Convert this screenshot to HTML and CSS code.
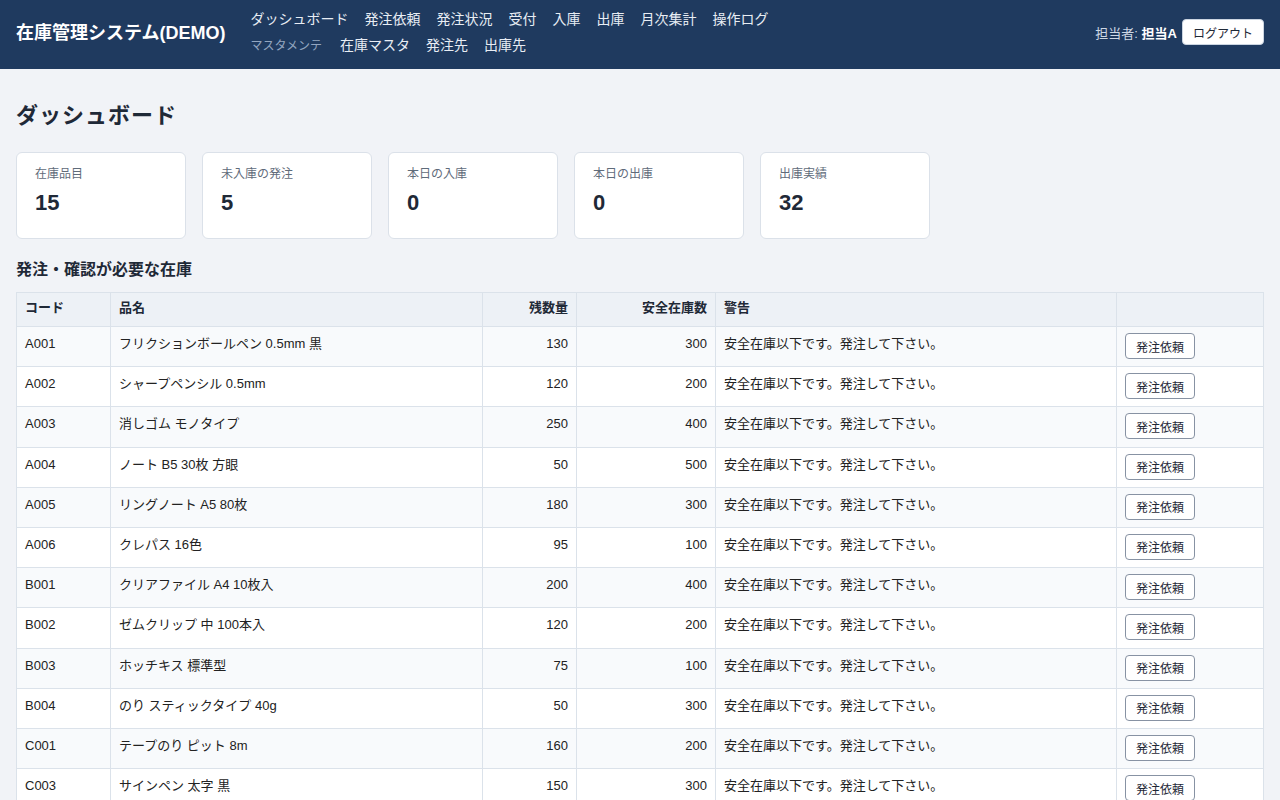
FILE: index.html
```html
<!DOCTYPE html>
<html lang="ja">
<head>
    <meta charset="utf-8">
    <title>ダッシュボード - 在庫管理システム</title>
    <link rel="stylesheet" href="styles.css">
</head>
<body>
    <header class="topbar">
        <div class="brand">在庫管理システム(DEMO)</div>
        <nav class="nav">
            <div class="nav-row">
                <a href="#">ダッシュボード</a>
                <a href="#">発注依頼</a>
                <a href="#">発注状況</a>
                <a href="#">受付</a>
                <a href="#">入庫</a>
                <a href="#">出庫</a>
                <a href="#">月次集計</a>
                <a href="#">操作ログ</a>
            </div>
            <div class="nav-row">
                <span class="nav-label">マスタメンテ</span>
                <a href="#">在庫マスタ</a>
                <a href="#">発注先</a>
                <a href="#">出庫先</a>
            </div>
        </nav>
        <div class="user">
            <span>担当者: <strong>担当A</strong></span>
            <button class="btn-logout">ログアウト</button>
        </div>
    </header>

    <main class="content">
        <h1>ダッシュボード</h1>

        <div class="stats">
            <div class="stat-card">
                <div class="stat-label">在庫品目</div>
                <div class="stat-value">15</div>
            </div>
            <div class="stat-card">
                <div class="stat-label">未入庫の発注</div>
                <div class="stat-value">5</div>
            </div>
            <div class="stat-card">
                <div class="stat-label">本日の入庫</div>
                <div class="stat-value">0</div>
            </div>
            <div class="stat-card">
                <div class="stat-label">本日の出庫</div>
                <div class="stat-value">0</div>
            </div>
            <div class="stat-card">
                <div class="stat-label">出庫実績</div>
                <div class="stat-value">32</div>
            </div>
        </div>

        <h2>発注・確認が必要な在庫</h2>

        <table class="stock-table">
            <colgroup>
                <col style="width: 94px">
                <col style="width: 372px">
                <col style="width: 94px">
                <col style="width: 139px">
                <col style="width: 401px">
                <col style="width: 147px">
            </colgroup>
            <thead>
                <tr>
                    <th>コード</th>
                    <th>品名</th>
                    <th class="num">残数量</th>
                    <th class="num">安全在庫数</th>
                    <th>警告</th>
                    <th></th>
                </tr>
            </thead>
            <tbody>
                <tr><td>A001</td><td>フリクションボールペン 0.5mm 黒</td><td class="num">130</td><td class="num">300</td><td>安全在庫以下です。発注して下さい。</td><td><button class="btn">発注依頼</button></td></tr>
                <tr><td>A002</td><td>シャープペンシル 0.5mm</td><td class="num">120</td><td class="num">200</td><td>安全在庫以下です。発注して下さい。</td><td><button class="btn">発注依頼</button></td></tr>
                <tr><td>A003</td><td>消しゴム モノタイプ</td><td class="num">250</td><td class="num">400</td><td>安全在庫以下です。発注して下さい。</td><td><button class="btn">発注依頼</button></td></tr>
                <tr><td>A004</td><td>ノート B5 30枚 方眼</td><td class="num">50</td><td class="num">500</td><td>安全在庫以下です。発注して下さい。</td><td><button class="btn">発注依頼</button></td></tr>
                <tr><td>A005</td><td>リングノート A5 80枚</td><td class="num">180</td><td class="num">300</td><td>安全在庫以下です。発注して下さい。</td><td><button class="btn">発注依頼</button></td></tr>
                <tr><td>A006</td><td>クレパス 16色</td><td class="num">95</td><td class="num">100</td><td>安全在庫以下です。発注して下さい。</td><td><button class="btn">発注依頼</button></td></tr>
                <tr><td>B001</td><td>クリアファイル A4 10枚入</td><td class="num">200</td><td class="num">400</td><td>安全在庫以下です。発注して下さい。</td><td><button class="btn">発注依頼</button></td></tr>
                <tr><td>B002</td><td>ゼムクリップ 中 100本入</td><td class="num">120</td><td class="num">200</td><td>安全在庫以下です。発注して下さい。</td><td><button class="btn">発注依頼</button></td></tr>
                <tr><td>B003</td><td>ホッチキス 標準型</td><td class="num">75</td><td class="num">100</td><td>安全在庫以下です。発注して下さい。</td><td><button class="btn">発注依頼</button></td></tr>
                <tr><td>B004</td><td>のり スティックタイプ 40g</td><td class="num">50</td><td class="num">300</td><td>安全在庫以下です。発注して下さい。</td><td><button class="btn">発注依頼</button></td></tr>
                <tr><td>C001</td><td>テープのり ピット 8m</td><td class="num">160</td><td class="num">200</td><td>安全在庫以下です。発注して下さい。</td><td><button class="btn">発注依頼</button></td></tr>
                <tr><td>C003</td><td>サインペン 太字 黒</td><td class="num">150</td><td class="num">300</td><td>安全在庫以下です。発注して下さい。</td><td><button class="btn">発注依頼</button></td></tr>
            </tbody>
        </table>
    </main>
</body>
</html>
```

FILE: styles.css
```css
body {
    margin: 0;
    font-family: "Liberation Sans", Arial, "Noto Sans CJK JP", sans-serif;
    background-color: #f1f3f7;
    color: #1f2937;
}

.topbar {
    display: flex;
    align-items: center;
    background-color: #1f3a5f;
    color: #fff;
    padding: 7px 16px 14px 16px;
}
.brand {
    font-size: 18px;
    font-weight: bold;
    margin-right: 25px;
    white-space: nowrap;
}
.nav {
    display: flex;
    flex-direction: column;
    gap: 4px;
}
.nav-row {
    display: flex;
    align-items: center;
    gap: 16px;
    height: 22px;
}
.nav-row a {
    color: #e8edf4;
    text-decoration: none;
    font-size: 14px;
}
.nav-label {
    font-size: 12px;
    color: #93a6c0;
    margin-right: 2px;
}
.user {
    margin-left: auto;
    display: flex;
    align-items: center;
    gap: 5px;
    font-size: 13px;
    color: #cdd7e4;
    margin-top: 2px;
}
.user strong {
    color: #fff;
}
.btn-logout {
    background-color: #fff;
    color: #1f2937;
    border: 1px solid #cbd5e1;
    border-radius: 4px;
    height: 26px;
    padding: 0 10px;
    font-family: inherit;
    font-size: 12px;
    cursor: pointer;
}

.content {
    padding: 32px 16px 16px 16px;
}
h1 {
    font-size: 22px;
    line-height: 30px;
    margin: 0 0 21px 0;
    letter-spacing: 1px;
}
.stats {
    display: flex;
    gap: 16px;
}
.stat-card {
    width: 170px;
    box-sizing: border-box;
    height: 87px;
    background-color: #fff;
    border: 1px solid #dbe1e9;
    border-radius: 6px;
    padding: 13px 18px 0 18px;
}
.stat-label {
    font-size: 12px;
    line-height: 16px;
    color: #5f6b7a;
}
.stat-value {
    font-size: 22px;
    font-weight: bold;
    line-height: 28px;
    margin-top: 7px;
}
h2 {
    font-size: 16px;
    line-height: 22px;
    margin: 20px 0 11px 0;
}

.stock-table {
    width: 1248px;
    table-layout: fixed;
    border-collapse: collapse;
    background-color: #fff;
    font-size: 13px;
}
.stock-table th,
.stock-table td {
    border: 1px solid #dbe2ea;
    text-align: left;
    vertical-align: top;
    line-height: 20px;
}
.stock-table th {
    background-color: #edf1f6;
    font-weight: bold;
    padding: 5px 8px 8px 8px;
}
.stock-table td {
    padding: 7px 8px 7.2px 8px;
    color: #222;
}
.stock-table tbody tr:nth-child(odd) {
    background-color: #f8fafc;
}
.stock-table .num {
    text-align: right;
}
.btn {
    display: block;
    margin-top: -1px;
    background-color: #fff;
    border: 1px solid #8792a3;
    border-radius: 4px;
    height: 26px;
    width: 70px;
    padding: 0;
    font-family: inherit;
    font-size: 12px;
    color: #1f2937;
    cursor: pointer;
}
```
